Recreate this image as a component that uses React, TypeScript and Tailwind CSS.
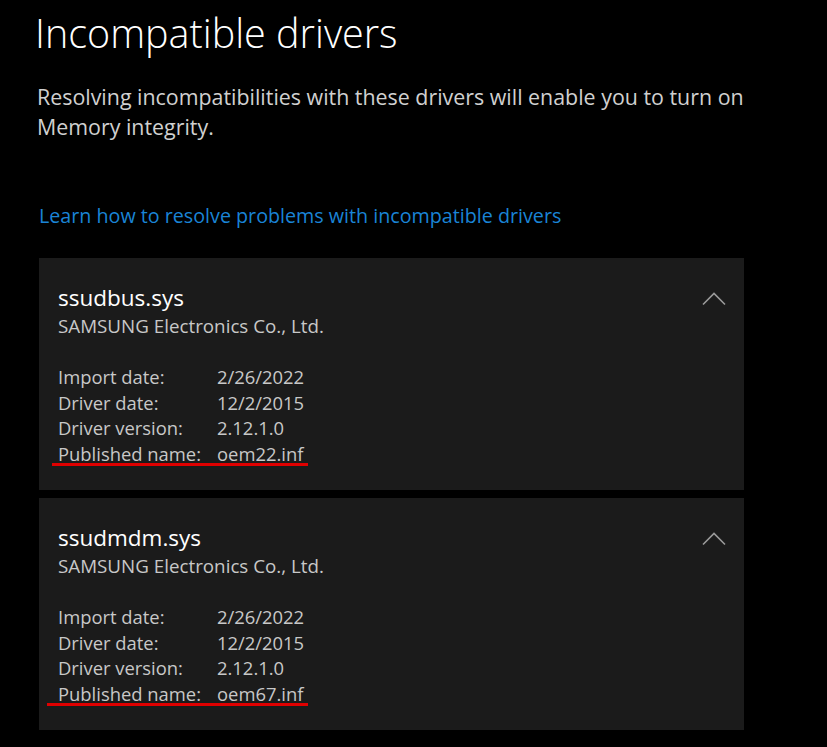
import React from "react";

interface DriverProps {
  name: string;
  vendor: string;
  importDate: string;
  driverDate: string;
  version: string;
  published: string;
  wide?: boolean;
}

function Chevron() {
  return (
    <svg width="24" height="14" viewBox="0 0 24 14" className="mt-[8px] mr-[18px]">
      <path d="M1 12.5 L12 1.5 L23 12.5" fill="none" stroke="#9a9a9a" strokeWidth="1.6" />
    </svg>
  );
}

function DriverCard({ name, vendor, importDate, driverDate, version, published, wide }: DriverProps) {
  const rows = [
    ["Import date:", importDate],
    ["Driver date:", driverDate],
    ["Driver version:", version],
  ];
  return (
    <div className="w-[705px] bg-[#1b1b1b] pl-[19px] pt-[26px] pb-[23px]">
      <div className="flex items-start justify-between">
        <div>
          <div className="text-[22.5px] leading-[28px] text-white">{name}</div>
          <div className="text-[18.8px] leading-[28px] text-[#c8c8c8]">{vendor}</div>
        </div>
        <Chevron />
      </div>
      <div className="mt-[24px] text-[18.4px] leading-[25.7px] text-[#c8c8c8]">
        {rows.map(([label, value]) => (
          <div key={label} className="flex">
            <span className="w-[159px]">{label}</span>
            <span>{value}</span>
          </div>
        ))}
        <div className="relative flex">
          <span className="w-[159px]">Published name:</span>
          <span>{published}</span>
          <div
            className={
              wide
                ? "absolute left-[-11px] top-[22px] h-[3px] w-[261px] bg-[#e00000]"
                : "absolute left-[-6px] top-[22px] h-[3px] w-[256px] bg-[#e00000]"
            }
          />
        </div>
      </div>
    </div>
  );
}

export default function App() {
  const common = {
    vendor: "SAMSUNG Electronics Co., Ltd.",
    importDate: "2/26/2022",
    driverDate: "12/2/2015",
    version: "2.12.1.0",
  };
  return (
    <div
      className="min-h-[747px] w-[827px] bg-black pb-[17px]"
      style={{ fontFamily: '"Open Sans", "Noto Sans", sans-serif' }}
    >
      <h1 className="pl-[35px] pt-[7px] text-[39.5px] font-light leading-[52px] text-white">
        Incompatible drivers
      </h1>
      <p className="mt-[23px] pl-[37px] pr-[40px] text-[21.4px] leading-[30px] text-[#d0d0d0]">
        Resolving incompatibilities with these drivers will enable you to turn on Memory integrity.
      </p>
      <div className="mt-[61px] pl-[39px] text-[19.7px] leading-[26px] text-[#1a84d6]">
        Learn how to resolve problems with incompatible drivers
      </div>
      <div className="mt-[29px] flex flex-col gap-[8px] pl-[39px]">
        <DriverCard name="ssudbus.sys" published="oem22.inf" {...common} />
        <DriverCard name="ssudmdm.sys" published="oem67.inf" wide {...common} />
      </div>
    </div>
  );
}
